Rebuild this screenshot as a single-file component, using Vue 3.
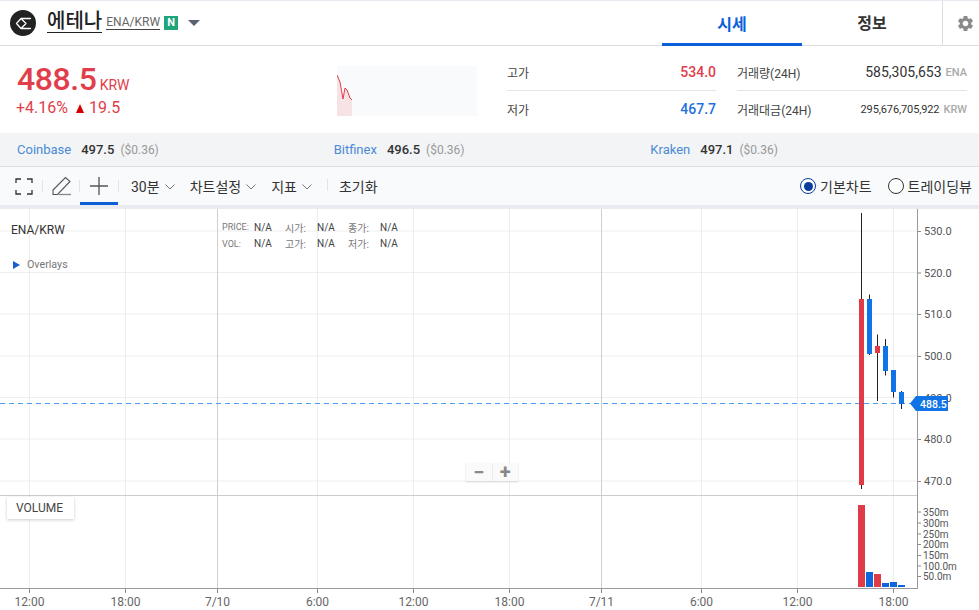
<script setup>
const priceLabels = [
  { t: '530.0', y: 231 }, { t: '520.0', y: 272.5 }, { t: '510.0', y: 314 },
  { t: '500.0', y: 356 }, { t: '490.0', y: 397.5 }, { t: '480.0', y: 439 }, { t: '470.0', y: 481 }
]
const volLabels = [
  { t: '350m', y: 512 }, { t: '300m', y: 523 }, { t: '250m', y: 534 }, { t: '200m', y: 544.5 },
  { t: '150m', y: 555.5 }, { t: '100.0m', y: 566 }, { t: '50.0m', y: 576.5 }
]
const times = [
  { t: '12:00', x: 29 }, { t: '18:00', x: 125 }, { t: '7/10', x: 217, major: true }, { t: '6:00', x: 317 },
  { t: '12:00', x: 413 }, { t: '18:00', x: 509 }, { t: '7/11', x: 601, major: true }, { t: '6:00', x: 701 },
  { t: '12:00', x: 797 }, { t: '18:00', x: 893 }
]
const candles = [
  { x: 859, w: 5, top: 299, bot: 485, hi: 213, lo: 489, up: true },
  { x: 867, w: 5, top: 299, bot: 354, hi: 294.5, lo: 355, up: false },
  { x: 875, w: 5, top: 346, bot: 353, hi: 334.5, lo: 401, up: true },
  { x: 883, w: 5, top: 346, bot: 371, hi: 339, lo: 375.5, up: false },
  { x: 891, w: 5, top: 370, bot: 392, hi: 370, lo: 397.5, up: false },
  { x: 899, w: 5, top: 392, bot: 404, hi: 391, lo: 409, up: false }
]
const volumes = [
  { x: 858, y: 505, up: true }, { x: 866, y: 572, up: false }, { x: 874, y: 574, up: true },
  { x: 882, y: 583, up: false }, { x: 890, y: 582, up: false }, { x: 898, y: 585, up: false }
]
const exchanges = [
  { name: 'Coinbase', price: '497.5' }, { name: 'Bitfinex', price: '496.5' }, { name: 'Kraken', price: '497.1' }
]
const legend = [
  { k: 'PRICE:', c: 'leg-en' }, { k: '시가:', c: '' }, { k: '종가:', c: '' },
  { k: 'VOL:', c: 'leg-en' }, { k: '고가:', c: '' }, { k: '저가:', c: '' }
]
</script>

<template>
  <div class="page">
    <header class="top">
      <div class="coin">
        <svg class="logo" width="26" height="26" viewBox="0 0 26 26">
          <circle cx="13" cy="13" r="13" fill="#222" />
          <path d="M20.5 8.5H11L6.5 13.5 11 18.5h9.5M11 8.5l5 5-5 5" fill="none" stroke="#fff" stroke-width="1.3" stroke-linejoin="round" stroke-linecap="round" />
        </svg>
        <span class="coin-name">에테나</span>
        <span class="coin-pair">ENA/KRW</span>
        <span class="badge">N</span>
        <span class="caret"></span>
      </div>
      <nav class="tabs">
        <span class="tab active">시세</span>
        <span class="tab">정보</span>
        <span class="gear">
          <svg width="19" height="19" viewBox="0 0 24 24"><path fill="#8a8a8a" d="M19.14 12.94c.04-.3.06-.61.06-.94 0-.32-.02-.64-.07-.94l2.03-1.58a.49.49 0 0 0 .12-.61l-1.92-3.32a.488.488 0 0 0-.59-.22l-2.39.96c-.5-.38-1.03-.7-1.62-.94l-.36-2.54a.484.484 0 0 0-.48-.41h-3.84c-.24 0-.43.17-.47.41l-.36 2.54c-.59.24-1.13.57-1.62.94l-2.39-.96c-.22-.08-.47 0-.59.22L2.74 8.87c-.12.21-.08.47.12.61l2.03 1.58c-.05.3-.09.63-.09.94s.02.64.07.94l-2.03 1.58a.49.49 0 0 0-.12.61l1.92 3.32c.12.22.37.29.59.22l2.39-.96c.5.38 1.03.7 1.62.94l.36 2.54c.05.24.24.41.48.41h3.84c.24 0 .44-.17.47-.41l.36-2.54c.59-.24 1.13-.56 1.62-.94l2.39.96c.22.08.47 0 .59-.22l1.92-3.32c.12-.22.07-.47-.12-.61l-2.01-1.58zM12 15.6c-1.98 0-3.6-1.62-3.6-3.6s1.62-3.6 3.6-3.6 3.6 1.62 3.6 3.6-1.62 3.6-3.6 3.6z" /></svg>
        </span>
      </nav>
    </header>

    <section class="summary">
      <div class="price-block">
        <div class="price-line"><span class="price">488.5</span><span class="price-unit">KRW</span></div>
        <div class="change"><span>+4.16%</span><span class="tri"></span><span>19.5</span></div>
      </div>
      <svg class="spark" width="140" height="50" viewBox="0 0 140 50">
        <path d="M0 9L3 16L6 33L8 22L10 24L13 32L15 34V50H0Z" fill="#f7e3e6" />
        <path d="M0 9L3 16L6 33L8 22L10 24L13 32L15 34" fill="none" stroke="#e23d4a" stroke-width="1" />
      </svg>
      <div class="stats stats-a">
        <div class="stat"><span class="lbl">고가</span><span class="val red">534.0</span></div>
        <div class="stat"><span class="lbl">저가</span><span class="val blue">467.7</span></div>
      </div>
      <div class="stats stats-b">
        <div class="stat"><span class="lbl">거래량(24H)</span><span class="amt"><b class="big">585,305,653</b><i>ENA</i></span></div>
        <div class="stat"><span class="lbl">거래대금(24H)</span><span class="amt"><b class="small">295,676,705,922</b><i>KRW</i></span></div>
      </div>
    </section>

    <section class="exchanges">
      <div v-for="e in exchanges" :key="e.name" class="ex">
        <span class="ex-name">{{ e.name }}</span><span class="ex-price">{{ e.price }}</span><span class="ex-usd">($0.36)</span>
      </div>
    </section>

    <section class="toolbar">
      <div class="tools">
        <span class="tool tool-full">
          <svg width="18" height="17" viewBox="0 0 18 17" fill="none" stroke="#333" stroke-width="1.3"><path d="M1 5V1h5M12 1h5v4M17 12v4h-5M6 16H1v-4" /></svg>
        </span>
        <span class="tool tool-pen">
          <svg width="20" height="20" viewBox="0 0 20 20" fill="none" stroke="#555" stroke-width="1.1"><path d="M1 14L13.5 1.5 18 5.5 5.5 18.5H1z" /><path d="M6.5 18.5H19" stroke="#888" stroke-width="1.3" /></svg>
        </span>
        <span class="tool tool-cross">
          <svg width="18" height="18" viewBox="0 0 18 18" stroke="#555" stroke-width="1.3"><path d="M0 9h18M9 0v18" /></svg>
        </span>
      </div>
      <div class="menus">
        <span class="menu">30분<svg class="chev" width="10" height="6" viewBox="0 0 10 6"><path d="M.5.5L5 5 9.5.5" fill="none" stroke="#777" /></svg></span>
        <span class="menu">차트설정<svg class="chev" width="10" height="6" viewBox="0 0 10 6"><path d="M.5.5L5 5 9.5.5" fill="none" stroke="#777" /></svg></span>
        <span class="menu">지표<svg class="chev" width="10" height="6" viewBox="0 0 10 6"><path d="M.5.5L5 5 9.5.5" fill="none" stroke="#777" /></svg></span>
        <span class="menu reset">초기화</span>
      </div>
      <div class="radios">
        <span class="radio on"><span class="dot"></span></span><span class="radio-lbl">기본차트</span>
        <span class="radio second"></span><span class="radio-lbl">트레이딩뷰</span>
      </div>
    </section>

    <section class="chart">
      <svg class="plot" width="979" height="401" viewBox="0 209 979 401">
        <g stroke="#eeeeee" stroke-width="1">
          <line v-for="p in priceLabels" :key="p.t" x1="0" x2="917" :y1="p.y" :y2="p.y" />
          <line v-for="t in times" :key="t.x" :x1="t.x + 0.5" :x2="t.x + 0.5" y1="209" y2="588" :stroke="t.major ? '#cfcfcf' : '#eeeeee'" />
        </g>
        <line x1="0" x2="917" y1="495.5" y2="495.5" stroke="#cccccc" />
        <line x1="0" x2="918" y1="588.5" y2="588.5" stroke="#999999" />
        <line x1="917.5" x2="917.5" y1="209" y2="589" stroke="#999999" />

        <g v-for="p in priceLabels" :key="'l' + p.t">
          <line x1="918" x2="921" :y1="p.y + 0.5" :y2="p.y + 0.5" stroke="#888" />
          <text class="axis" x="924" :y="p.y + 4">{{ p.t }}</text>
        </g>
        <g v-for="v in volLabels" :key="v.t">
          <line x1="918" x2="921" :y1="v.y" :y2="v.y" stroke="#888" />
          <text class="axis vol" x="923" :y="v.y + 3.5">{{ v.t }}</text>
        </g>
        <g v-for="t in times" :key="'t' + t.x">
          <line :x1="t.x + 0.5" :x2="t.x + 0.5" y1="589" y2="593" stroke="#888" />
          <text class="time" :x="t.x + 0.5" y="606" text-anchor="middle">{{ t.t }}</text>
        </g>

        <line x1="0" x2="912" y1="403.5" y2="403.5" stroke="#4f9bf2" stroke-dasharray="5 4" />

        <g v-for="c in candles" :key="c.x">
          <line :x1="c.x + 2.5" :x2="c.x + 2.5" :y1="c.hi" :y2="c.lo" stroke="#222" />
          <rect :x="c.x" :y="c.top" :width="c.w" :height="c.bot - c.top" :fill="c.up ? '#e03c48' : '#1273e6'" />
        </g>
        <rect v-for="v in volumes" :key="'v' + v.x" :x="v.x" :y="v.y" width="7" :height="587 - v.y" :fill="v.up ? '#e03c48' : '#0f66dc'" />

        <path d="M910 403.5L916 396H948V411H916Z" fill="#1273e6" />
        <text class="tag" x="920" y="407.5">488.5</text>
      </svg>

      <div class="legend">
        <div class="pair">ENA/KRW</div>
        <div class="overlays"><span class="ov-tri"></span>Overlays</div>
      </div>
      <div class="ohlc">
        <template v-for="l in legend" :key="l.k">
          <span class="leg-key" :class="l.c">{{ l.k }}</span><span class="leg-val">N/A</span>
        </template>
      </div>
      <div class="zoom"><span>−</span><span>+</span></div>
      <div class="vol-box">VOLUME</div>
    </section>
  </div>
</template>

<style>
html, body { margin: 0; background: #fff; overflow: hidden; }
</style>

<style scoped>
.page {
  width: 979px; height: 610px; overflow: hidden; background: #fff; color: #333;
  font-family: Roboto, "Noto Sans CJK KR", sans-serif;
}
.top {
  height: 44px; border-top: 1px solid #e6e9f0; border-bottom: 1px solid #dcdde0;
  display: flex; justify-content: space-between; align-items: stretch;
}
.coin { display: flex; align-items: center; padding-left: 10px; }
.logo { flex: none; }
.coin-name {
  margin-left: 11px; margin-bottom: 3px; font-size: 20px; line-height: 22px; color: #222; font-weight: 500;
  border-bottom: 1.5px solid #222;
}
.coin-pair {
  margin-left: 4px; margin-bottom: 1px; font-size: 12px; line-height: 14px; color: #666;
  border-bottom: 1px solid #444;
}
.badge {
  margin-left: 4px; width: 14px; height: 14px; background: #1fa57a; color: #fff;
  font-size: 11px; font-weight: 700; line-height: 14px; text-align: center;
}
.caret {
  margin-left: 10px; width: 0; height: 0; border-style: solid; border-width: 6px 6.5px 0;
  border-color: #5b6172 transparent transparent;
}
.tabs { display: flex; align-items: stretch; }
.tab {
  width: 140px; height: 44px; display: flex; align-items: center; justify-content: center;
  font-size: 16px; font-weight: 700; color: #333; box-sizing: border-box; padding-bottom: 2px;
}
.tab.active { color: #0a5fd8; border-bottom: 3px solid #0a5fd8; padding: 2px 0 0; height: 45px; }
.gear {
  width: 37px; border-left: 1px solid #dcdde0; display: flex; align-items: center;
  justify-content: center; padding-left: 9px; box-sizing: border-box;
}
.summary { height: 87px; display: flex; position: relative; }
.price-block { width: 320px; padding: 15px 0 0 16px; box-sizing: border-box; flex: none; }
.price-line { display: flex; align-items: baseline; height: 36px; }
.price { font-size: 32px; font-weight: 500; color: #e23d4a; line-height: 36px; letter-spacing: -0.4px; margin-left: 1px; }
.price-unit { font-size: 14px; color: #e23d4a; margin-left: 3px; }
.change { display: flex; align-items: center; font-size: 16px; color: #e23d4a; margin-top: 1px; line-height: 20px; }
.tri {
  width: 0; height: 0; margin: 1px 5px 0 8px; border-style: solid; border-width: 0 4.5px 9px;
  border-color: transparent transparent #d40000;
}
.spark { margin: 20px 0 0 17px; background: #f9fafc; flex: none; }
.stats { display: flex; flex-direction: column; padding-top: 8px; }
.stats-a { width: 209px; margin-left: 30px; }
.stats-b { width: 230px; margin-left: 21px; }
.stat { height: 36px; display: flex; align-items: center; justify-content: space-between; }
.stat:first-child { border-bottom: 1px solid #e4e5e8; }
.lbl { font-size: 12px; color: #444; }
.val { font-size: 14px; font-weight: 500; }
.red { color: #e23d4a; }
.blue { color: #1f6fe0; }
.amt { display: flex; align-items: center; }
.amt b { font-weight: 400; color: #333; }
.amt .big { font-size: 14px; }
.amt .small { font-size: 11px; letter-spacing: -0.12px; }
.amt i { font-style: normal; font-size: 11px; color: #aaa; margin-left: 4px; font-weight: 500; }
.exchanges {
  height: 33px; background: #f3f4f6; border-bottom: 1px solid #dcdde0;
  display: grid; grid-template-columns: repeat(3, 1fr); padding: 0 12px 0 17px; align-items: center;
  font-size: 13px;
}
.ex { display: flex; align-items: baseline; }
.ex-name { color: #4a8ad4; }
.ex-price { margin-left: 10px; font-weight: 500; color: #333; }
.ex-usd { margin-left: 6px; color: #999; font-size: 12px; }
.toolbar {
  height: 38px; background: #f9fafc; border-bottom: 4px solid #e9ebf0; display: flex; align-items: stretch;
  font-size: 14px; color: #333;
}
.tools { display: flex; margin-left: 5px; }
.tool { display: flex; align-items: center; justify-content: center; position: relative; box-sizing: border-box; }
.tool-full { width: 38px; }
.tool-pen { width: 37px; }
.tool-cross { width: 38px; border-bottom: 3px solid #0a5fd8; padding-top: 3px; }
.tool-full::after, .tool-pen::after {
  content: ""; position: absolute; right: 0; top: 13px; height: 12px; width: 1px; background: #e3e4e8;
}
.tool-cross::after {
  content: ""; position: absolute; right: -1px; top: 13px; height: 12px; width: 1px; background: #e3e4e8;
}
.menus { display: flex; align-items: center; margin-left: 13px; }
.menu { display: flex; align-items: center; margin-right: 15px; position: relative; }
.chev { margin-left: 5px; margin-top: 1px; }
.reset { margin-left: 12px; }
.reset::before {
  content: ""; position: absolute; left: -12px; top: 3px; height: 12px; width: 1px; background: #e3e4e8;
}
.radios { margin-left: auto; display: flex; align-items: center; padding-right: 7px; }
.radio {
  width: 16px; height: 16px; border: 1.5px solid #333; border-radius: 50%; box-sizing: border-box;
  display: flex; align-items: center; justify-content: center; margin-right: 4px; background: #fff;
}
.radio.on { border-color: #0a3d9c; }
.dot { width: 9px; height: 9px; border-radius: 50%; background: #0a3d9c; }
.second { margin-left: 16px; }
.chart { position: relative; height: 401px; background: #fff; }
.plot { display: block; }
.axis { font-size: 11px; fill: #555; font-family: Roboto, sans-serif; }
.vol { font-size: 10px; }
.time { font-size: 12px; fill: #666; font-family: Roboto, sans-serif; }
.tag { font-size: 10.5px; fill: #fff; font-weight: 500; font-family: Roboto, sans-serif; }
.legend { position: absolute; left: 11px; top: 13px; }
.pair { font-size: 12px; line-height: 16px; color: #333; }
.overlays {
  margin-top: 20px; margin-left: 2px; font-size: 10.7px; line-height: 14px; color: #777;
  display: flex; align-items: center;
}
.ov-tri {
  width: 0; height: 0; margin-right: 7px; border-style: solid; border-width: 4px 0 4px 7px;
  border-color: transparent transparent transparent #1a5fd0;
}
.ohlc {
  position: absolute; left: 222px; top: 10px; display: grid;
  grid-template-columns: 32px 31px 32px 31px 32px 30px; grid-auto-rows: 16.5px; align-items: center;
  font-size: 10px;
}
.leg-key { color: #777; font-size: 10px; }
.leg-en { font-size: 9px; }
.leg-val { color: #444; }
.zoom {
  position: absolute; left: 466px; top: 254px; width: 52px; height: 18px; display: flex; background: #fafafa;
  box-shadow: 0 1px 2px rgba(0, 0, 0, 0.15); font-size: 20px; font-weight: 700; color: #888;
}
.zoom span { flex: 1; text-align: center; line-height: 18px; }
.zoom span + span { border-left: 1px solid #ececec; }
.vol-box {
  position: absolute; left: 7px; top: 288px; width: 67px; height: 22px; padding-left: 9px; box-sizing: border-box;
  background: #fff; box-shadow: 0 1px 3px rgba(0, 0, 0, 0.2); font-size: 12px; line-height: 22px; color: #444;
}
</style>
